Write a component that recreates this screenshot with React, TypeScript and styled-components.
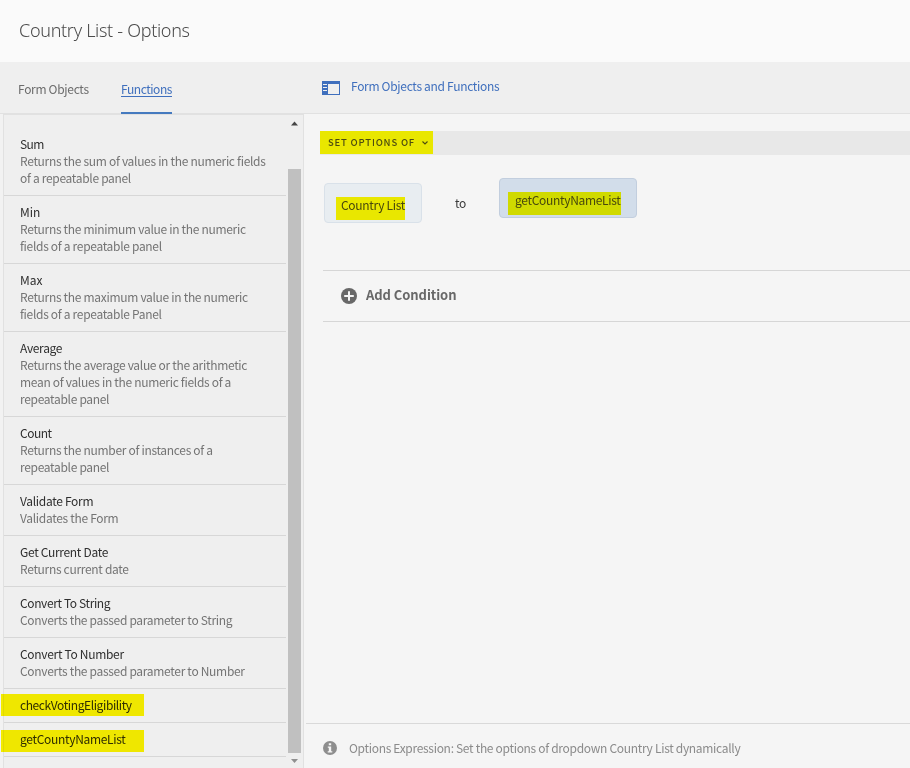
import React from "react";
import styled, { createGlobalStyle } from "styled-components";

const GlobalStyle = createGlobalStyle`
  * { box-sizing: border-box; }
  body {
    margin: 0;
    background: #f5f5f5;
    font-family: "Noto Sans CJK SC", "Noto Sans", sans-serif;
    font-size: 12px;
    line-height: 17px;
    overflow: hidden;
  }
`;

const Page = styled.div`
  display: flex;
  flex-direction: column;
  width: 910px;
  height: 768px;
  overflow: hidden;
`;

const Text = styled.span<{ $spacing?: number }>`
  display: block;
  white-space: nowrap;
  letter-spacing: ${({ $spacing = -0.31 }) => $spacing}px;
`;

const Header = styled.header`
  flex: none;
  height: 62px;
  padding: 18px 19px 0;
  background: #fafafa;
  color: #4b4b4b;
  font-family: "Noto Sans", sans-serif;
  font-size: 18px;
  font-weight: 300;
  line-height: 25px;
`;

const Toolbar = styled.div`
  flex: none;
  display: flex;
  height: 52px;
  background: #efefef;
  border-bottom: 1px solid #e1e1e1;
`;

const Tabs = styled.nav`
  display: flex;
  gap: 32px;
  width: 322px;
  padding-left: 18px;
`;

const Tab = styled.div<{ $active?: boolean; $width: number }>`
  width: ${({ $width }) => $width}px;
  height: 52px;
  padding-top: 18px;
  color: ${({ $active }) => ($active ? "#3f6fbd" : "#6c6c6c")};
  text-decoration: ${({ $active }) => ($active ? "underline" : "none")};
  text-underline-offset: 2px;
  border-bottom: 2px solid ${({ $active }) => ($active ? "#457abf" : "transparent")};
`;

const PanelToggle = styled.div`
  display: flex;
  gap: 11px;
  padding-top: 15px;
  color: #3f6fbd;

  svg { margin-top: 4px; }
`;

const Body = styled.div`
  flex: 1;
  display: flex;
  min-height: 0;
`;

const Sidebar = styled.aside`
  display: flex;
  flex: none;
  width: 301px;
  margin-left: 3px;
  background: #efefef;
  border: 1px solid #e1e1e1;
  border-bottom: 0;
  box-shadow: -3px 0 0 #f2f2f2;
`;

const List = styled.ul`
  width: 282px;
  margin: 0;
  padding: 13px 0 0;
  list-style: none;
`;

const Item = styled.li`
  position: relative;
  padding: 7px 0 9px 16px;
  border-bottom: 1px solid #d7d7d7;
  color: #2f2f2f;
`;

const Description = styled(Text)`
  color: #747474;
`;

const ItemMark = styled.span<{ $top: number }>`
  position: absolute;
  left: -3px;
  top: ${({ $top }) => $top}px;
  width: 143px;
  height: 22px;
  background: #fff700;
  mix-blend-mode: multiply;
`;

const Scrollbar = styled.div`
  display: flex;
  flex-direction: column;
  align-items: center;
  width: 13px;
  margin-left: 2px;
  padding-top: 6px;
`;

const Thumb = styled.div`
  width: 13px;
  height: 584px;
  margin: 43px 0 6px;
  background: #c0c0c0;
`;

const Editor = styled.main`
  flex: 1;
  display: flex;
  flex-direction: column;
  min-width: 0;
  background: #f5f5f5;
`;

const StatementBar = styled.div`
  flex: none;
  height: 24px;
  margin: 17px 0 0 16px;
  background: #e8e8e8;
`;

const StatementSelect = styled.div`
  display: flex;
  align-items: center;
  gap: 7px;
  width: 113px;
  height: 23px;
  padding-left: 8px;
  background: #e9e700;
  color: #4d4c10;
  font-size: 9.5px;
  font-weight: 500;
`;

const Expression = styled.div`
  flex: none;
  display: flex;
  align-items: flex-start;
  height: 115px;
  padding: 23px 0 0 20px;
  color: #3a3a3a;
`;

const Chip = styled.div<{ $selected?: boolean; $width: number }>`
  position: relative;
  width: ${({ $width }) => $width}px;
  height: 40px;
  margin-top: ${({ $selected }) => ($selected ? 0 : 5)}px;
  padding: 12px 0 0 ${({ $selected }) => ($selected ? 15 : 16)}px;
  background: ${({ $selected }) => ($selected ? "#d2ddea" : "#e8edf1")};
  border: 1px solid ${({ $selected }) => ($selected ? "#c2cede" : "#d9e1e9")};
  border-radius: 4px;
`;

const ChipMark = styled.span<{ $left: number; $width: number; $color: string }>`
  position: absolute;
  left: ${({ $left }) => $left}px;
  top: 13px;
  width: ${({ $width }) => $width}px;
  height: 23px;
  background: ${({ $color }) => $color};
`;

const ChipText = styled(Text)`
  position: relative;
  color: #48480c;
`;

const Connector = styled.div`
  width: 77px;
  padding: 16px 0 0 33px;
`;

const AddCondition = styled.div`
  flex: none;
  display: flex;
  align-items: center;
  gap: 9px;
  height: 52px;
  margin-left: 19px;
  padding-left: 18px;
  border-top: 1px solid #d6d6d6;
  border-bottom: 1px solid #d6d6d6;
  color: #686868;
  font-size: 13px;
  font-weight: 700;

  ${Text} { margin-bottom: 3px; }
`;

const StatusBar = styled.footer`
  display: flex;
  align-items: center;
  gap: 12px;
  height: 45px;
  margin: auto 0 0 2px;
  padding: 3px 0 0 17px;
  border-top: 1px solid #d9d9d9;
  color: #8b8b8b;
`;

interface FunctionEntry {
  name: string;
  spacing?: number;
  lines?: string[];
  mark?: number;
}

const FUNCTIONS: FunctionEntry[] = [
  { name: "Sum", spacing: -0.6, lines: ["Returns the sum of values in the numeric fields", "of a repeatable panel"] },
  { name: "Min", spacing: 0, lines: ["Returns the minimum value in the numeric", "fields of a repeatable panel"] },
  { name: "Max", spacing: 0, lines: ["Returns the maximum value in the numeric", "fields of a repeatable Panel"] },
  {
    name: "Average",
    lines: ["Returns the average value or the arithmetic", "mean of values in the numeric fields of a", "repeatable panel"],
  },
  { name: "Count", spacing: -0.5, lines: ["Returns the number of instances of a", "repeatable panel"] },
  { name: "Validate Form", lines: ["Validates the Form"] },
  { name: "Get Current Date", lines: ["Returns current date"] },
  { name: "Convert To String", spacing: -0.38, lines: ["Converts the passed parameter to String"] },
  { name: "Convert To Number", lines: ["Converts the passed parameter to Number"] },
  { name: "checkVotingEligibility", spacing: -0.4, mark: 5 },
  { name: "getCountyNameList", mark: 7 },
];

const PanelIcon = () => (
  <svg width="18" height="14" viewBox="0 0 18 14">
    <path fill="#3f6fbd" fillRule="evenodd" d="M0 0h18v14H0zM6 3h11v10H6zM1 3h4v1H1zM1 6h4v1H1zM1 9h4v1H1z" />
  </svg>
);

const AddIcon = () => (
  <svg width="16" height="16" viewBox="0 0 16 16">
    <circle cx="8" cy="8" r="8" fill="#686868" />
    <path d="M8 3.2v9.6M3.2 8h9.6" stroke="#f5f5f5" strokeWidth="2" />
  </svg>
);

const InfoIcon = () => (
  <svg width="14" height="14" viewBox="0 0 14 14">
    <circle cx="7" cy="7" r="7" fill="#8e8e8e" />
    <path fill="#f5f5f5" d="M5.8 2.2h2.4v2H5.8zM4.8 5.4h3.4v4.8h1.1v1.3H4.7v-1.3h1.1V6.7h-1z" />
  </svg>
);

const Arrow = ({ down }: { down?: boolean }) => (
  <svg width="7" height="5" viewBox="0 0 7 5">
    <path d={down ? "M0 0h7L3.5 4z" : "M0 4.5h7L3.5 .5z"} fill={down ? "#8f8f8f" : "#454545"} />
  </svg>
);

export default function App() {
  return (
    <Page>
      <GlobalStyle />
      <Header><Text>Country List - Options</Text></Header>
      <Toolbar>
        <Tabs>
          <Tab $width={71}><Text>Form Objects</Text></Tab>
          <Tab $active $width={51}><Text $spacing={-0.45}>Functions</Text></Tab>
        </Tabs>
        <PanelToggle>
          <PanelIcon />
          <Text>Form Objects and Functions</Text>
        </PanelToggle>
      </Toolbar>
      <Body>
        <Sidebar>
          <List>
            {FUNCTIONS.map((fn) => (
              <Item key={fn.name}>
                <Text $spacing={fn.spacing}>{fn.name}</Text>
                {fn.lines?.map((line) => (
                  <Description key={line}>{line}</Description>
                ))}
                {fn.mark !== undefined && <ItemMark $top={fn.mark} />}
              </Item>
            ))}
          </List>
          <Scrollbar>
            <Arrow />
            <Thumb />
            <Arrow down />
          </Scrollbar>
        </Sidebar>
        <Editor>
          <StatementBar>
            <StatementSelect>
              <Text $spacing={0.8}>SET OPTIONS OF</Text>
              <svg width="6" height="4" viewBox="0 0 6 4">
                <path d="M.5.5 3 3 5.5.5" fill="none" stroke="#4d4c10" strokeWidth="1.1" />
              </svg>
            </StatementSelect>
          </StatementBar>
          <Expression>
            <Chip $width={98}>
              <ChipMark $left={11} $width={69} $color="#e9e700" />
              <ChipText>Country List</ChipText>
            </Chip>
            <Connector><Text>to</Text></Connector>
            <Chip $selected $width={138}>
              <ChipMark $left={8} $width={113} $color="#d0da00" />
              <ChipText>getCountyNameList</ChipText>
            </Chip>
          </Expression>
          <AddCondition>
            <AddIcon />
            <Text $spacing={-0.06}>Add Condition</Text>
          </AddCondition>
          <StatusBar>
            <InfoIcon />
            <Text>Options Expression: Set the options of dropdown Country List dynamically</Text>
          </StatusBar>
        </Editor>
      </Body>
    </Page>
  );
}
